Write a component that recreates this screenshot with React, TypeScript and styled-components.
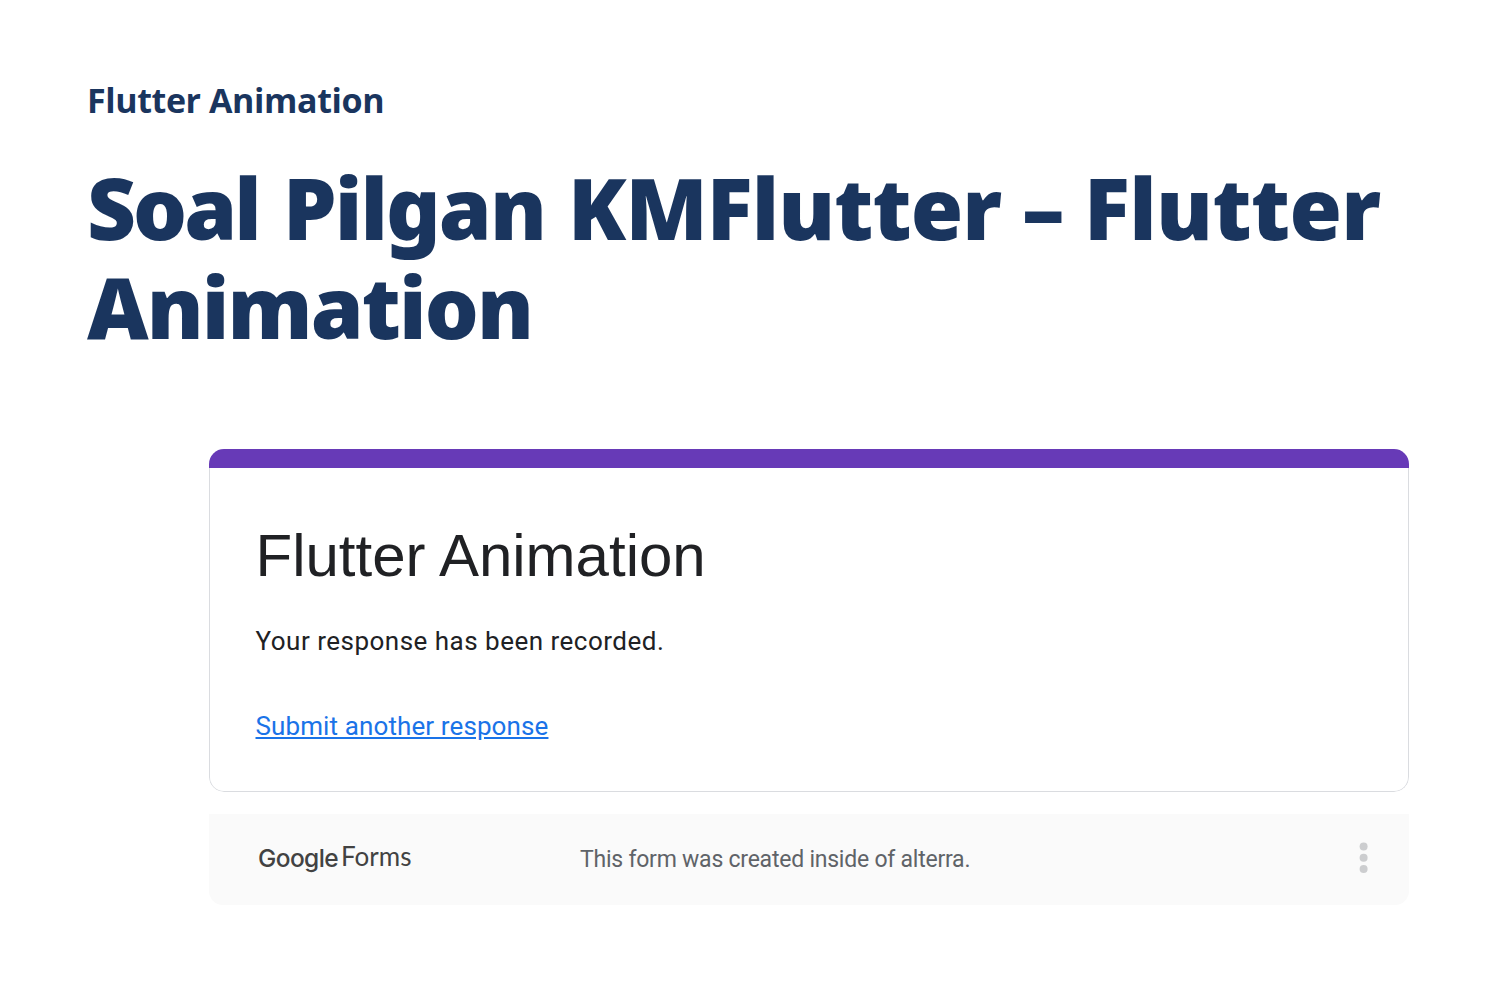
import React from "react";
import styled, { createGlobalStyle } from "styled-components";

const GlobalStyle = createGlobalStyle`
  * { box-sizing: border-box; }
  body { margin: 0; background: #fff; }
`;

const Page = styled.main`
  width: 1507px;
  height: 981px;
  padding: 76px 98px 0 87px;
  overflow: hidden;
  background: #fff;
`;

const Eyebrow = styled.p`
  margin: 0;
  font: 700 34px/48px "Open Sans", sans-serif;
  letter-spacing: -0.4px;
  color: #1a355e;
  white-space: nowrap;
`;

const Heading = styled.h1`
  margin: 34px 0 0;
  font: 900 85px/99px "Noto Sans", "Open Sans", sans-serif;
  color: #1a355e;
`;

const HeadingLine = styled.span`
  display: flex;
  white-space: nowrap;
`;

const Word = styled.span<{ $width: number; $tracking: number }>`
  flex: 0 0 ${(p) => p.$width}px;
  letter-spacing: ${(p) => p.$tracking}px;
`;

const FormArea = styled.section`
  width: 1200px;
  margin: 93px 0 0 122px;
`;

const Card = styled.article`
  height: 343px;
  border-radius: 15px;
  overflow: hidden;
`;

const Stripe = styled.div`
  height: 19px;
  background: #673ab7;
`;

const CardBody = styled.div`
  height: 324px;
  padding: 48px 45.5px 0;
  border: 1px solid #dadce0;
  border-top: 0;
  border-radius: 0 0 15px 15px;
  color: #202124;
`;

const FormTitle = styled.h2`
  margin: 0;
  font: 400 60px/80px "Liberation Sans", Arial, sans-serif;
`;

const Message = styled.p`
  margin: 26px 0 0;
  font: 400 26px/38px Roboto, sans-serif;
  letter-spacing: 0.49px;
`;

const ResponseLink = styled.a`
  display: inline-block;
  margin-top: 47px;
  font: 400 26px/38px Roboto, sans-serif;
  letter-spacing: 0.11px;
  color: #1a73e8;
  text-decoration: underline;
`;

const Footer = styled.footer`
  display: flex;
  align-items: center;
  height: 91px;
  margin-top: 22px;
  padding: 0 40px 3px 49px;
  background: #fafafa;
  border-radius: 0 0 14px 14px;
`;

const Logo = styled.div`
  display: flex;
  align-items: flex-start;
  width: 322px;
  color: #424242;
`;

const Brand = styled.span`
  width: 83px;
  font: 500 24.5px/32px Inter, sans-serif;
  letter-spacing: -0.6px;
`;

const Product = styled.span`
  font: 400 26px/28px Lato, sans-serif;
`;

const Notice = styled.span`
  flex: 1;
  padding-top: 4px;
  font: 400 23px/32px Roboto, sans-serif;
  letter-spacing: -0.23px;
  color: #5f6368;
`;

export default function App() {
  return (
    <Page>
      <GlobalStyle />
      <Eyebrow>Flutter Animation</Eyebrow>
      <Heading>
        <HeadingLine>
          <Word $width={196} $tracking={-3}>Soal</Word>
          <Word $width={285} $tracking={-1.9}>Pilgan</Word>
          <Word $width={454} $tracking={-0.9}>KMFlutter</Word>
          <Word $width={62} $tracking={0}>–</Word>
          <Word $width={300} $tracking={-0.6}>Flutter</Word>
        </HeadingLine>
        <HeadingLine>
          <Word $width={450} $tracking={-1.9}>Animation</Word>
        </HeadingLine>
      </Heading>
      <FormArea>
        <Card>
          <Stripe />
          <CardBody>
            <FormTitle>Flutter Animation</FormTitle>
            <Message>Your response has been recorded.</Message>
            <ResponseLink>Submit another response</ResponseLink>
          </CardBody>
        </Card>
        <Footer>
          <Logo>
            <Brand>Google</Brand>
            <Product>Forms</Product>
          </Logo>
          <Notice>This form was created inside of alterra.</Notice>
          <svg width="10" height="32" viewBox="0 0 10 32" fill="#cccdcf">
            <circle cx="4.6" cy="4.6" r="4" />
            <circle cx="4.6" cy="15.8" r="4" />
            <circle cx="4.6" cy="27" r="4" />
          </svg>
        </Footer>
      </FormArea>
    </Page>
  );
}
